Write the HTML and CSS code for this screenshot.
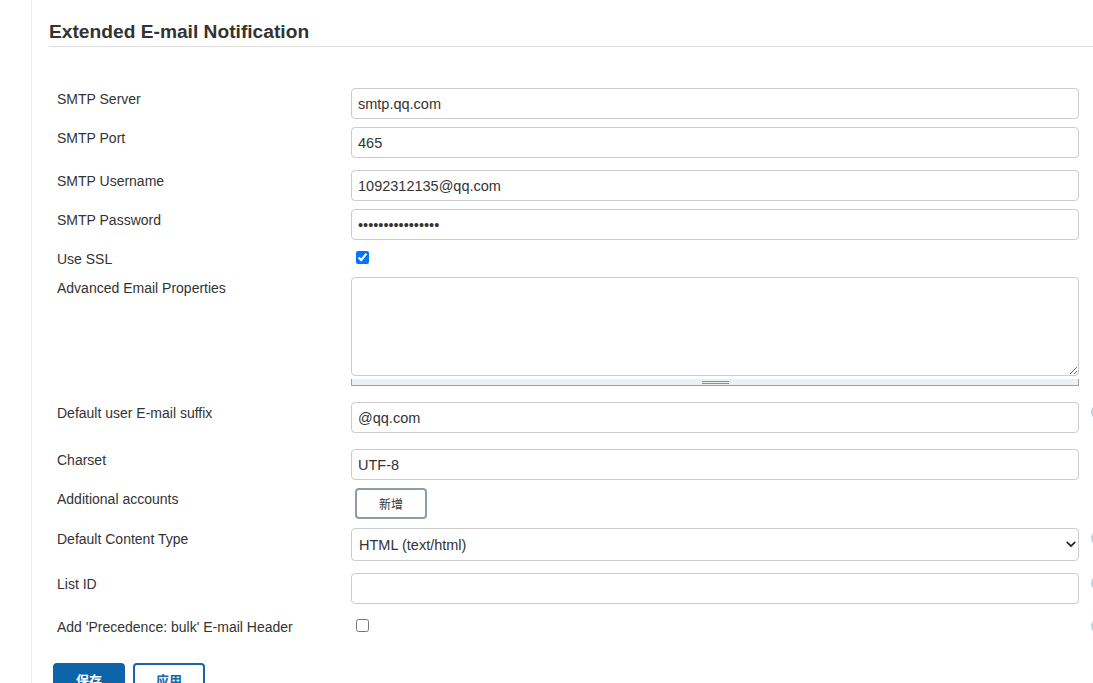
FILE: index.html
```html
<!DOCTYPE html>
<html>
<head>
<meta charset="utf-8">
<link rel="stylesheet" href="styles.css">
</head>
<body>
<div class="page">
  <main class="main">
    <h2 class="section-title">Extended E-mail Notification</h2>
    <form class="form">
      <div class="row first">
        <label class="label">SMTP Server</label>
        <input class="field" type="text" value="smtp.qq.com">
        <span class="help"></span>
      </div>
      <div class="row">
        <label class="label">SMTP Port</label>
        <input class="field" type="text" value="465">
        <span class="help"></span>
      </div>
      <div class="row gap-12">
        <label class="label">SMTP Username</label>
        <input class="field" type="text" value="1092312135@qq.com">
        <span class="help"></span>
      </div>
      <div class="row">
        <label class="label">SMTP Password</label>
        <input class="field" type="password" value="xxxxxxxxxxxxxxxx">
        <span class="help"></span>
      </div>
      <div class="row">
        <label class="label">Use SSL</label>
        <div class="check-cell"><input class="check" type="checkbox" checked></div>
        <span class="help"></span>
      </div>
      <div class="row gap-9">
        <label class="label">Advanced Email Properties</label>
        <div class="area-cell">
          <textarea class="area"></textarea>
          <div class="resize-bar"><span class="grip"></span></div>
        </div>
        <span class="help"></span>
      </div>
      <div class="row gap-16">
        <label class="label">Default user E-mail suffix</label>
        <input class="field" type="text" value="@qq.com">
        <span class="help visible"></span>
      </div>
      <div class="row gap-16">
        <label class="label">Charset</label>
        <input class="field" type="text" value="UTF-8">
        <span class="help"></span>
      </div>
      <div class="row">
        <label class="label">Additional accounts</label>
        <div class="btn-cell"><button type="button" class="btn-add">新增</button></div>
        <span class="help"></span>
      </div>
      <div class="row gap-9">
        <label class="label">Default Content Type</label>
        <div class="select-wrap">
          <select class="select">
            <option>HTML (text/html)</option>
          </select>
          <svg class="chevron" width="12" height="8" viewBox="0 0 12 8"><path d="M1.5 1.5 L6 6 L10.5 1.5" fill="none" stroke="#222" stroke-width="2" stroke-linecap="round" stroke-linejoin="round"/></svg>
        </div>
        <span class="help visible"></span>
      </div>
      <div class="row gap-12">
        <label class="label">List ID</label>
        <input class="field" type="text" value="">
        <span class="help visible"></span>
      </div>
      <div class="row gap-12">
        <label class="label">Add 'Precedence: bulk' E-mail Header</label>
        <div class="check-cell"><input class="check" type="checkbox"></div>
        <span class="help visible"></span>
      </div>
      <div class="actions">
        <button type="button" class="btn-primary">保存</button>
        <button type="button" class="btn-secondary">应用</button>
      </div>
    </form>
  </main>
</div>
</body>
</html>
```

FILE: styles.css
```css
html, body {
  margin: 0;
  padding: 0;
  background: #ffffff;
  overflow: hidden;
}

body {
  font-family: "Liberation Sans", Arial, "Noto Sans CJK SC", sans-serif;
  color: #333333;
  width: 1093px;
  height: 683px;
}

.page {
  padding-left: 31px;
  height: 683px;
}

.main {
  border-left: 1px solid #e6edf3;
  padding-left: 17px;
  height: 683px;
  padding-top: 1px;
  box-sizing: border-box;
}

.section-title {
  margin: 19px 0 0 0;
  font-size: 19.2px;
  font-weight: bold;
  line-height: 23px;
  color: #333333;
  padding-bottom: 3px;
  border-bottom: 1px solid #dcdcdc;
  width: 1100px;
}

.form {
  padding-left: 8px;
}

.row {
  display: grid;
  grid-template-columns: 294px 728px 20px;
  column-gap: 0;
  align-items: start;
  margin-top: 8px;
}

.row.first { margin-top: 41px; }
.row.gap-9 { margin-top: 9px; }
.row.gap-12 { margin-top: 12px; }
.row.gap-16 { margin-top: 16px; }

.label {
  font-size: 14px;
  line-height: 17px;
  padding-top: 3px;
  color: #333333;
}

.field {
  box-sizing: border-box;
  width: 728px;
  height: 31px;
  margin: 0;
  border: 1px solid #cccccc;
  border-radius: 4px;
  padding: 0 6px;
  font-family: "Liberation Sans", Arial, sans-serif;
  font-size: 14.5px;
  color: #333333;
  background: #ffffff;
  outline: none;
}

.check-cell {
  height: 17px;
  padding-top: 3px;
}

.check {
  margin: 0 0 0 5px;
  width: 13px;
  height: 13px;
  display: block;
}

.area-cell {
  display: flex;
  flex-direction: column;
}

.area {
  box-sizing: border-box;
  width: 728px;
  height: 99px;
  margin: 0;
  border: 1px solid #cccccc;
  border-radius: 4px;
  resize: vertical;
  font-family: "Liberation Sans", Arial, sans-serif;
  outline: none;
}

.resize-bar {
  box-sizing: border-box;
  margin-top: 3px;
  height: 7px;
  width: 728px;
  background: #eef1f4;
  border: 1px solid #9aa4ad;
  border-top: none;
  display: flex;
  justify-content: center;
  align-items: center;
}

.grip {
  width: 27px;
  height: 3px;
  border-top: 1px solid #8a9088;
  border-bottom: 1px solid #8a9088;
  box-sizing: border-box;
}

.btn-cell {
  padding-left: 4px;
}

.btn-add {
  box-sizing: border-box;
  width: 72px;
  height: 31px;
  margin: 0;
  border: 2px solid #8f9ca8;
  border-radius: 4px;
  background: #ffffff;
  color: #333333;
  font-family: "Noto Sans CJK SC", sans-serif;
  font-size: 12px;
  padding: 0;
}

.select-wrap {
  position: relative;
  width: 728px;
}

.select {
  appearance: none;
  -webkit-appearance: none;
  box-sizing: border-box;
  width: 728px;
  height: 33px;
  margin: 0;
  border: 1px solid #cccccc;
  border-radius: 4px;
  padding: 0 7px;
  font-family: "Liberation Sans", Arial, sans-serif;
  font-size: 14.5px;
  color: #333333;
  background: #ffffff;
  outline: none;
}

.chevron {
  position: absolute;
  right: 3px;
  top: 13px;
  width: 10px;
  height: 7px;
}

.help {
  width: 16px;
  height: 16px;
  margin-left: 12px;
  margin-top: 2px;
  border-radius: 50%;
}

.help.visible {
  background: #b9d2e8;
}

.actions {
  display: flex;
  gap: 8px;
  margin-top: 27px;
  margin-left: -4px;
}

.btn-primary,
.btn-secondary {
  box-sizing: border-box;
  width: 72px;
  height: 32px;
  border-radius: 4px;
  font-family: "Noto Sans CJK SC", sans-serif;
  font-size: 13px;
  font-weight: bold;
  padding: 0;
  margin: 0;
}

.btn-primary {
  background: #0e64a9;
  border: 2px solid #0e64a9;
  color: #ffffff;
}

.btn-secondary {
  background: #ffffff;
  border: 2px solid #1565a8;
  color: #1565a8;
}
```
